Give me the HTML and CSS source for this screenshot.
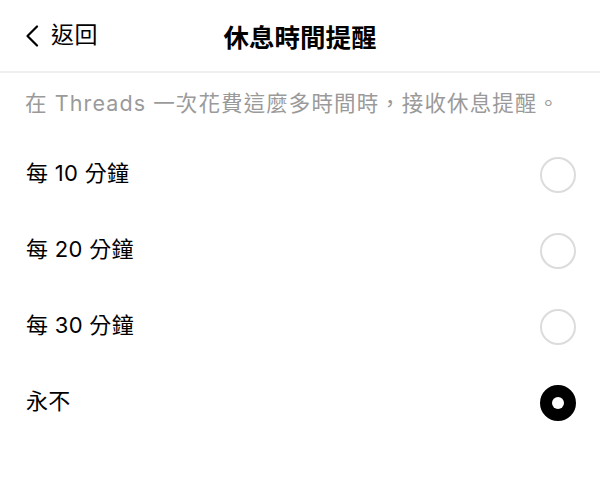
FILE: index.html
```html
<!DOCTYPE html>
<html lang="zh-Hant">
<head>
<meta charset="utf-8">
<link rel="stylesheet" href="styles.css">
</head>
<body>
<div class="page">
  <header class="header">
    <div class="back">
      <svg class="chev" width="14" height="22" viewBox="0 0 14 22"><path d="M12 1.5 L2.5 11 L12 20.5" fill="none" stroke="#000" stroke-width="2.2" stroke-linecap="round" stroke-linejoin="round"/></svg>
      <span class="back-text">返回</span>
    </div>
    <h1 class="title">休息時間提醒</h1>
  </header>
  <p class="desc">在 Threads 一次花費這麼多時間時，接收休息提醒。</p>
  <ul class="options">
    <li class="option"><span class="label">每 10 分鐘</span><span class="radio"></span></li>
    <li class="option"><span class="label">每 20 分鐘</span><span class="radio"></span></li>
    <li class="option"><span class="label">每 30 分鐘</span><span class="radio"></span></li>
    <li class="option"><span class="label">永不</span><span class="radio selected"></span></li>
  </ul>
</div>
</body>
</html>
```
FILE: styles.css
```css
html, body {
  margin: 0;
  padding: 0;
  background: #fff;
}
body {
  font-family: Inter, "Noto Sans CJK TC", sans-serif;
  color: #000;
}
.page {
  width: 600px;
}
.header {
  height: 71px;
  border-bottom: 2px solid #efefef;
  position: relative;
  display: flex;
  align-items: center;
  justify-content: center;
}
.back {
  position: absolute;
  left: 25px;
  top: 0;
  height: 71px;
  display: flex;
  align-items: center;
  gap: 12px;
}
.chev {
  display: block;
}
.back-text {
  font-size: 23px;
  line-height: 1;
  letter-spacing: 0.5px;
}
.title {
  margin: 0;
  font-size: 25.5px;
  font-weight: 700;
  line-height: 1;
  margin-top: 4px;
}
.desc {
  margin: 0;
  padding: 16px 25px 20px;
  font-size: 21.5px;
  line-height: 28px;
  color: #9a9a9a;
  white-space: nowrap;
  letter-spacing: 1.1px;
}
.options {
  list-style: none;
  margin: 0;
  padding: 0;
}
.option {
  height: 76px;
  display: flex;
  align-items: center;
  justify-content: space-between;
  padding: 0 24px 0 26px;
}
.label {
  font-size: 22px;
  line-height: 1;
  margin-top: -4px;
  letter-spacing: 0.3px;
}
.radio {
  width: 36px;
  height: 36px;
  box-sizing: border-box;
  border: 2px solid #dcdcdc;
  border-radius: 50%;
  display: flex;
  align-items: center;
  justify-content: center;
}
.radio.selected {
  background: #000;
  border-color: #000;
}
.radio.selected::after {
  content: "";
  width: 12px;
  height: 12px;
  border-radius: 50%;
  background: #fff;
}
```
